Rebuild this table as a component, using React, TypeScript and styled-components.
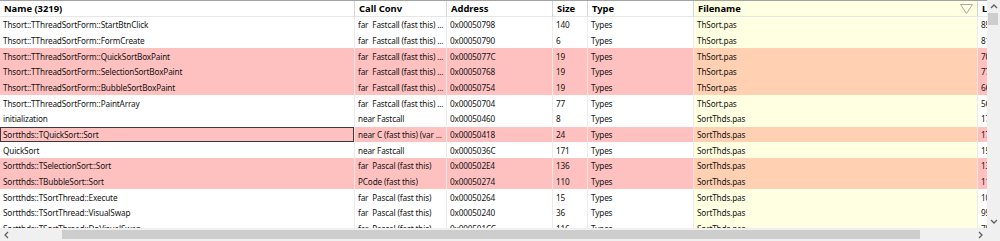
import React from 'react';
import styled, { createGlobalStyle } from 'styled-components';

const GlobalStyle = createGlobalStyle`
  html, body {
    margin: 0;
    padding: 0;
    background: #fff;
  }
  body {
    font-family: 'Noto Sans', 'DejaVu Sans', sans-serif;
  }
`;

const COLS = '355px 92px 106px 35px 106px 284px 40px';

const PINK = '#ffc0c0';
const YELLOW = '#ffffe1';
const PEACH = '#ffd0b2';

const Window = styled.div`
  width: 1000px;
  height: 241px;
  display: grid;
  grid-template-columns: 987px 13px;
  grid-template-rows: 228px 13px;
  overflow: hidden;
  background: #fff;
  color: #141414;
`;

const Table = styled.div`
  display: flex;
  flex-direction: column;
  overflow: hidden;
  border-top: 1px solid #a3a3a3;
`;

const HeaderRow = styled.div`
  display: grid;
  grid-template-columns: ${COLS};
  height: 16px;
  flex: none;
`;

const HeaderCell = styled.div<{ $bg?: string }>`
  display: flex;
  align-items: center;
  justify-content: space-between;
  min-width: 0;
  padding: 0 4px;
  background: ${(p) => p.$bg || '#fff'};
  border-right: 1px solid #d6d6d6;
  border-bottom: 1px solid #e6e6e6;
  font-size: 9.4px;
  font-weight: 700;
  color: #000;
  white-space: nowrap;
  overflow: hidden;
`;

const Row = styled.div<{ $bg: string }>`
  display: grid;
  grid-template-columns: ${COLS};
  height: 15.67px;
  flex: none;
  background: ${(p) => p.$bg};
`;

const Cell = styled.div<{ $bg?: string; $line: string; $focus?: boolean }>`
  display: flex;
  align-items: center;
  min-width: 0;
  padding: 0 3px;
  background: ${(p) => p.$bg || 'transparent'};
  border-right: 1px solid ${(p) => p.$line};
  box-shadow: ${(p) => (p.$focus ? 'inset 0 0 0 1px #3a3a3a' : 'none')};
  font-size: 8.2px;
  letter-spacing: -0.15px;
  white-space: pre;
  overflow: hidden;
  text-overflow: clip;
`;

const VScroll = styled.div`
  display: flex;
  flex-direction: column;
  background: #f0f0f0;
`;

const HScroll = styled.div`
  display: flex;
  align-items: center;
  background: #f0f0f0;
`;

const Corner = styled.div`
  background: #f0f0f0;
`;

const ArrowBtn = styled.div`
  width: 13px;
  height: 13px;
  flex: none;
  display: flex;
  align-items: center;
  justify-content: center;
`;

const VThumb = styled.div`
  width: 10px;
  height: 12px;
  margin-left: 1px;
  background: #cdcdcd;
`;

const HThumb = styled.div`
  height: 9px;
  width: 858px;
  margin-left: 49px;
  background: #cdcdcd;
`;

const Spacer = styled.div`
  flex: 1;
`;

type Entry = {
  name: string;
  conv: string;
  addr: string;
  size: string;
  file: string;
  line: string;
  hl?: boolean;
  sel?: boolean;
};

const FAST = 'far  Fastcall (fast this) ...';
const PASCAL = 'far  Pascal (fast this)';

const rows: Entry[] = [
  { name: 'Thsort::TThreadSortForm::StartBtnClick', conv: FAST, addr: '0x00050798', size: '140', file: 'ThSort.pas', line: '85' },
  { name: 'Thsort::TThreadSortForm::FormCreate', conv: FAST, addr: '0x00050790', size: '6', file: 'ThSort.pas', line: '81' },
  { name: 'Thsort::TThreadSortForm::QuickSortBoxPaint', conv: FAST, addr: '0x0005077C', size: '19', file: 'ThSort.pas', line: '70', hl: true },
  { name: 'Thsort::TThreadSortForm::SelectionSortBoxPaint', conv: FAST, addr: '0x00050768', size: '19', file: 'ThSort.pas', line: '77', hl: true },
  { name: 'Thsort::TThreadSortForm::BubbleSortBoxPaint', conv: FAST, addr: '0x00050754', size: '19', file: 'ThSort.pas', line: '66', hl: true },
  { name: 'Thsort::TThreadSortForm::PaintArray', conv: FAST, addr: '0x00050704', size: '77', file: 'ThSort.pas', line: '56' },
  { name: 'initialization', conv: 'near Fastcall', addr: '0x00050460', size: '8', file: 'SortThds.pas', line: '17' },
  { name: 'Sortthds::TQuickSort::Sort', conv: 'near C (fast this) (var ...', addr: '0x00050418', size: '24', file: 'SortThds.pas', line: '17', hl: true, sel: true },
  { name: 'QuickSort', conv: 'near Fastcall', addr: '0x0005036C', size: '171', file: 'SortThds.pas', line: '15' },
  { name: 'Sortthds::TSelectionSort::Sort', conv: PASCAL, addr: '0x000502E4', size: '136', file: 'SortThds.pas', line: '13', hl: true },
  { name: 'Sortthds::TBubbleSort::Sort', conv: 'PCode (fast this)', addr: '0x00050274', size: '110', file: 'SortThds.pas', line: '11', hl: true },
  { name: 'Sortthds::TSortThread::Execute', conv: PASCAL, addr: '0x00050264', size: '15', file: 'SortThds.pas', line: '10' },
  { name: 'Sortthds::TSortThread::VisualSwap', conv: PASCAL, addr: '0x00050240', size: '36', file: 'SortThds.pas', line: '95' },
  { name: 'Sortthds::TSortThread::DoVisualSwap', conv: PASCAL, addr: '0x000501CC', size: '116', file: 'SortThds.pas', line: '79' },
];

const Chevron = ({ dir }: { dir: 'up' | 'down' | 'left' | 'right' }) => {
  const pts = {
    up: '1,5 4,2 7,5',
    down: '1,2 4,5 7,2',
    left: '5,1 2,4 5,7',
    right: '2,1 5,4 2,7',
  }[dir];
  return (
    <svg width="8" height="8" viewBox="0 0 8 8">
      <polyline points={pts} fill="none" stroke="#606060" strokeWidth="1.3" />
    </svg>
  );
};

const SortMark = () => (
  <svg width="13" height="10" viewBox="0 0 13 10">
    <polygon points="0.5,0.5 12.5,0.5 6.5,9.5" fill="none" stroke="#a8a8a8" strokeWidth="1" />
  </svg>
);

const App = () => {
  return (
    <>
      <GlobalStyle />
      <Window>
        <Table>
          <HeaderRow>
            <HeaderCell>Name (3219)</HeaderCell>
            <HeaderCell>Call Conv</HeaderCell>
            <HeaderCell>Address</HeaderCell>
            <HeaderCell>Size</HeaderCell>
            <HeaderCell>Type</HeaderCell>
            <HeaderCell $bg={YELLOW}>
              Filename
              <SortMark />
            </HeaderCell>
            <HeaderCell>Line</HeaderCell>
          </HeaderRow>
          {rows.map((r) => {
            const line = r.hl ? '#ffe2e2' : '#ececec';
            return (
              <Row key={r.addr} $bg={r.hl ? PINK : '#fff'}>
                <Cell $line={line} $focus={r.sel}>{r.name}</Cell>
                <Cell $line={line}>{r.conv}</Cell>
                <Cell $line={line}>{r.addr}</Cell>
                <Cell $line={line}>{r.size}</Cell>
                <Cell $line={line}>Types</Cell>
                <Cell $line={line} $bg={r.hl ? PEACH : YELLOW}>{r.file}</Cell>
                <Cell $line={line}>{r.line}</Cell>
              </Row>
            );
          })}
        </Table>
        <VScroll>
          <ArrowBtn>
            <Chevron dir="up" />
          </ArrowBtn>
          <VThumb />
          <Spacer />
          <ArrowBtn>
            <Chevron dir="down" />
          </ArrowBtn>
        </VScroll>
        <HScroll>
          <ArrowBtn>
            <Chevron dir="left" />
          </ArrowBtn>
          <HThumb />
          <Spacer />
          <ArrowBtn>
            <Chevron dir="right" />
          </ArrowBtn>
        </HScroll>
        <Corner />
      </Window>
    </>
  );
};

export default App;
